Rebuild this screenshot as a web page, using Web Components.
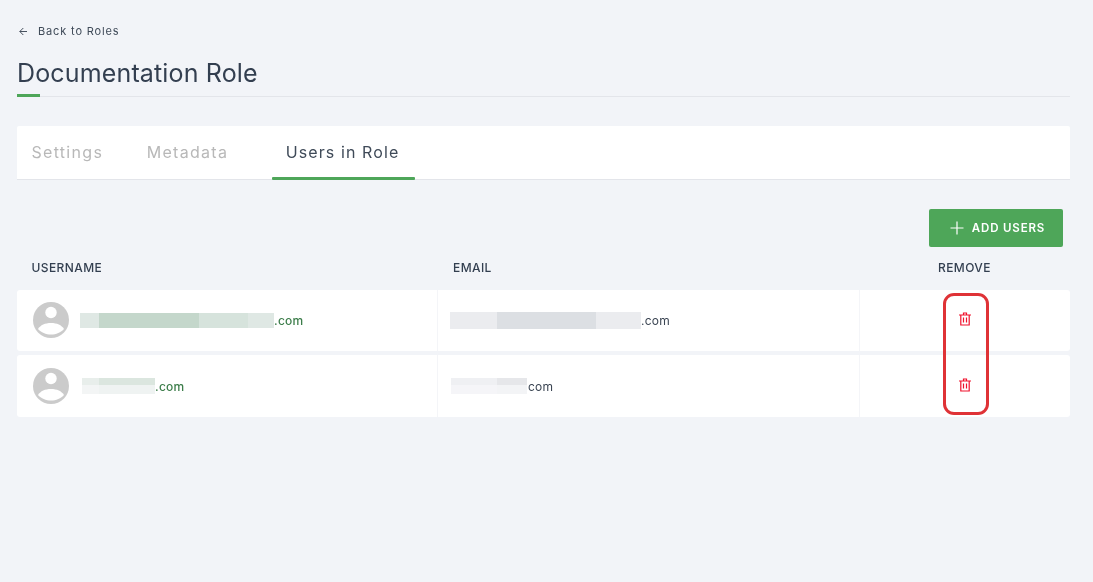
<!DOCTYPE html>
<html><head><meta charset="utf-8"><style>
html,body{margin:0;height:100%}
body{background:#f2f4f8;font-family:Inter,"Liberation Sans",sans-serif;color:#333f50;overflow:hidden}
</style></head><body>
<role-page></role-page>
<script>
const def=(name,css,html)=>customElements.define(name,class extends HTMLElement{
  constructor(){super();this.attachShadow({mode:'open'}).innerHTML=`<style>${css}</style>${html}`;}
});
def('back-link',`:host{display:flex;align-items:center;gap:11px;height:14px;font-size:11px;letter-spacing:.85px;color:#3f4a58;margin-left:2px}
svg{width:8px;height:9px;display:block}`,
`<svg viewBox="0 0 8 9" fill="none" stroke="#48525f" stroke-width="1"><path d="M8 4.500H.8M4.300 1 .8 4.500 4.300 8"/></svg><slot></slot>`);
def('page-title',`:host{display:block;margin-top:20px;height:38px;border-bottom:1px solid #e3e5ea;position:relative}
h1{margin:0;font-size:25px;line-height:30px;font-weight:400;letter-spacing:.15px;color:#333f50}
i{position:absolute;left:0;bottom:-1px;width:23px;height:3px;background:#4ea659}`,
`<h1><slot></slot></h1><i></i>`);
def('tab-bar',`:host{display:flex;height:53px;margin-top:29px;background:#fff;border-bottom:1px solid #e3e5ea;border-radius:2px 2px 0 0}`,`<slot></slot>`);
def('tab-item',`:host{display:flex;align-items:center;padding:0 15px 2px 14.5px;margin-right:14px;font-size:16px;letter-spacing:1.3px;color:#b8b8b8;height:53px;box-sizing:border-box;position:relative}
:host([active]){color:#3f4a58;margin-left:15px;margin-right:0;padding:0 16px 2px 13.5px;letter-spacing:1.1px}
:host([active])::after{content:"";position:absolute;left:0;right:0;bottom:-1px;height:3px;background:#4ea659;border-radius:1px}`,`<slot></slot>`);
def('add-button',`:host{display:flex;align-items:center;justify-content:center;gap:8px;width:134px;height:38px;padding-left:3px;box-sizing:border-box;background:#4ea659;border-radius:2px;color:#fff;font-size:11.5px;font-weight:600;letter-spacing:.85px}
svg{width:14px;height:14px;display:block}`,
`<svg viewBox="0 0 14 14" stroke="#fff" stroke-width="1.2" fill="none"><path d="M7 .5v13M.5 7h13"/></svg><slot></slot>`);
def('table-head',`:host{display:grid;grid-template-columns:421px 422px 211px;height:20px;margin-top:11px;font-size:12px;font-weight:500;line-height:20px;letter-spacing:.4px;color:#333f50}
::slotted(span){display:block}
::slotted(:nth-child(1)){padding-left:14.5px}
::slotted(:nth-child(2)){padding-left:15px}
::slotted(:nth-child(3)){padding-left:78px}`,`<slot></slot>`);
def('user-row',`:host{display:grid;grid-template-columns:420px 1px 421px 1px 210px;height:62px;background:#fff;border-radius:3px}
:host([first]){height:61px}
.c{display:flex;align-items:center;min-width:0}
.u{padding-left:16px;color:#3c7d4a;font-size:12px;font-weight:500;letter-spacing:.25px}
.e{padding-left:12px;color:#3a4452;font-size:12px;letter-spacing:.25px}
.d{background:#f4f5f8}
.r{justify-content:flex-start;padding-left:99px;align-items:flex-start;padding-top:23px;box-sizing:border-box}
:host([first]) .r{padding-top:22px}
svg.a{width:36px;height:36px;display:block;margin-right:11px;flex:none}
:host([first]) svg.a{margin-top:-1px}
svg.t{width:12px;height:14px;display:block}`,
`<div class="c u"><svg class="a" viewBox="0 0 36 36"><circle cx="18" cy="18" r="18" fill="#cbcbcb"/><circle cx="18" cy="10.500" r="5.700" fill="#fff"/><path d="M5 27C7.500 23 12 21 18 21s10.500 2 13 6C28 30.500 23 32.500 18 32.500S8 30.500 5 27z" fill="#fff"/></svg><slot name="user"></slot></div><div class="d"></div>
<div class="c e"><slot name="email"></slot></div><div class="d"></div>
<div class="c r"><svg class="t" viewBox="0 0 12 14" fill="none" stroke="#f0122d" stroke-width="1.200"><path d="M0 3h12M1.800 3v10h8.400V3M4.500 3V1h3v2M4.500 5.500v5M7.500 5.500v5"/></svg></div>`);
def('callout-box',`:host{position:absolute;left:943px;top:293px;width:46px;height:122px;box-sizing:border-box;border:3px solid #df3236;border-radius:11px;pointer-events:none}`,``);
def('role-page',`:host{display:block;position:relative;width:1093px;height:582px;box-sizing:border-box;padding:24px 23px 0 17px;will-change:transform}
.act{display:flex;justify-content:flex-end;margin-top:29px;padding-right:7px}
.rows{display:flex;flex-direction:column;gap:4px;margin-top:12px}
span.x{display:block}`,
`<back-link>Back to Roles</back-link>
<page-title>Documentation Role</page-title>
<tab-bar><tab-item>Settings</tab-item><tab-item>Metadata</tab-item><tab-item active>Users in Role</tab-item></tab-bar>
<div class="act"><add-button>ADD USERS</add-button></div>
<table-head><span>USERNAME</span><span>EMAIL</span><span>REMOVE</span></table-head>
<div class="rows">
<user-row first>
 <span slot="user" style="display:inline-flex;align-items:center"><span style="display:flex;height:15px"><span class="x" style="width:19px;background:#dfe8e4"></span><span class="x" style="width:100px;background:#c4d7cb"></span><span class="x" style="width:49px;background:#d6e3dc"></span><span class="x" style="width:26px;background:#dfe8e4"></span></span>.com</span>
 <span slot="email" style="display:inline-flex;align-items:center"><span style="display:flex;height:17px"><span class="x" style="width:47px;background:#ebecef"></span><span class="x" style="width:99px;background:#dcdfe3"></span><span class="x" style="width:45px;background:#ebecef"></span></span>.com</span>
</user-row>
<user-row>
 <span slot="user" style="display:inline-flex;align-items:center"><span style="display:flex;flex-direction:column;margin-left:2px"><span style="display:flex;height:7px"><span class="x" style="width:17px;background:#e8eeeb"></span><span class="x" style="width:56px;background:#dbe6df"></span></span><span style="display:flex;height:9px"><span class="x" style="width:17px;background:#f3f5f5"></span><span class="x" style="width:56px;background:#eff3f2"></span></span></span>.com</span>
 <span slot="email" style="display:inline-flex;align-items:center"><span style="display:flex;flex-direction:column;margin-right:1px;margin-left:1px"><span style="display:flex;height:7px"><span class="x" style="width:46px;background:#eff0f3"></span><span class="x" style="width:30px;background:#e6e7ea"></span></span><span style="display:flex;height:9px"><span class="x" style="width:46px;background:#f5f5f8"></span><span class="x" style="width:30px;background:#f3f4f6"></span></span></span>com</span>
</user-row>
</div>
<callout-box></callout-box>`);
</script></body></html>
